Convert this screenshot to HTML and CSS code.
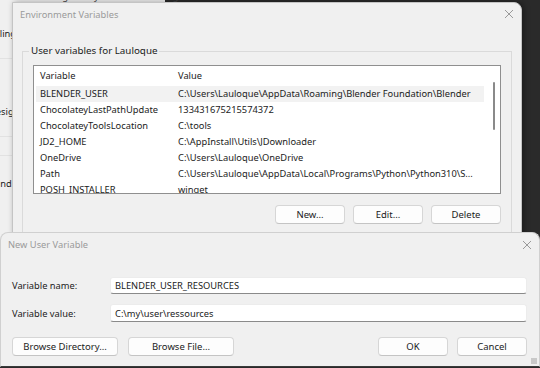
FILE: index.html
```html
<!DOCTYPE html>
<html lang="en">
<head>
  <meta charset="UTF-8" />
  <title>Environment Variables</title>
  <link rel="stylesheet" href="styles.css">
</head>
<body>
  <div class="desktop">
    <div class="bgwin">
      <div class="bg-top">Some changes may restart this dialog</div>
      <div class="bg-item bg-item-a">Scaling</div>
      <div class="bg-sep"></div>
      <div class="bg-item bg-item-b">Design</div>
      <div class="bg-sep"></div>
      <div class="bg-sep"></div>
      <div class="bg-item bg-item-c">Find and c</div>
    </div>

    <section class="window env">
      <header class="titlebar">
        <span class="title">Environment Variables</span>
        <svg class="close" width="10" height="10" viewBox="0 0 10 10"><path d="M1 1L9 9M9 1L1 9" stroke="#9a9a9a" stroke-width="1" fill="none"/></svg>
      </header>
      <fieldset class="group">
        <legend>User variables for Lauloque</legend>
        <div class="list">
          <div class="row list-head"><span>Variable</span><span>Value</span></div>
          <div class="row sel"><span>BLENDER_USER</span><span>C:\Users\Lauloque\AppData\Roaming\Blender Foundation\Blender</span></div>
          <div class="row"><span>ChocolateyLastPathUpdate</span><span>133431675215574372</span></div>
          <div class="row"><span>ChocolateyToolsLocation</span><span>C:\tools</span></div>
          <div class="row"><span>JD2_HOME</span><span>C:\AppInstall\Utils\JDownloader</span></div>
          <div class="row"><span>OneDrive</span><span>C:\Users\Lauloque\OneDrive</span></div>
          <div class="row"><span>Path</span><span>C:\Users\Lauloque\AppData\Local\Programs\Python\Python310\S...</span></div>
          <div class="row"><span>POSH_INSTALLER</span><span>winget</span></div>
          <div class="scrollbar"></div>
        </div>
        <div class="actions">
          <button class="btn">New...</button>
          <button class="btn">Edit...</button>
          <button class="btn">Delete</button>
        </div>
      </fieldset>
    </section>

    <section class="window newvar">
      <header class="titlebar">
        <span class="title">New User Variable</span>
        <svg class="close" width="10" height="10" viewBox="0 0 10 10"><path d="M1 1L9 9M9 1L1 9" stroke="#9a9a9a" stroke-width="1" fill="none"/></svg>
      </header>
      <div class="form">
        <label class="field"><span class="field-label">Variable name:</span><span class="input">BLENDER_USER_RESOURCES</span></label>
        <label class="field"><span class="field-label">Variable value:</span><span class="input input-tall">C:\my\user\ressources</span></label>
        <div class="form-actions">
          <div class="btn-group">
            <button class="btn btn-wide">Browse Directory...</button>
            <button class="btn btn-wide">Browse File...</button>
          </div>
          <div class="btn-group btn-group-right">
            <button class="btn">OK</button>
            <button class="btn">Cancel</button>
          </div>
        </div>
      </div>
      <div class="grip"></div>
    </section>
  </div>
</body>
</html>
```

FILE: styles.css
```css
body {
  margin: 0;
  font-family: 'Noto Sans', 'DejaVu Sans', sans-serif;
  font-size: 9.3px;
  color: #1b1b1b;
  background: #2a2a2a;
}

.desktop {
  position: relative;
  width: 540px;
  height: 368px;
  overflow: hidden;
  background: #2a2a2a;
}

/* window behind, only its left edge shows */
.bgwin {
  position: absolute;
  left: 0;
  top: 0;
  width: 165px;
  height: 240px;
  background: #f0f0f0;
}

.bg-top {
  margin-top: -10px;
  height: 13px;
  line-height: 13px;
  padding-left: 14px;
  white-space: nowrap;
  color: #444;
}

.bg-item {
  line-height: 13px;
  white-space: nowrap;
}

.bg-item-a { margin: 24px 0 0 -15px; }
.bg-item-b { margin: 46px 0 0 -11px; }
.bg-item-c { margin: 21px 0 0 -7px; }

.bg-sep {
  height: 1px;
  background: #e2e2e2;
  margin-top: 18px;
}

.window {
  position: absolute;
  background: #f0f0f0;
  border: 1px solid #c4c4c4;
  box-sizing: border-box;
}

.titlebar {
  display: flex;
  align-items: center;
  justify-content: space-between;
  height: 22px;
  padding: 0 7px;
}

.title {
  color: #9a9a9a;
}

.env {
  left: 12px;
  top: 2px;
  width: 510px;
  height: 250px;
  border-radius: 0 8px 0 0;
  box-shadow: 2px 0 6px rgba(0, 0, 0, 0.35);
}

.group {
  margin: 19px 9px 0 9px;
  padding: 7px 10px 10px 10px;
  border: 1px solid #dadada;
}

.group legend {
  padding: 0 2px;
  margin-left: -4px;
  line-height: 14px;
  font-size: 9.8px;
}

.list {
  position: relative;
  height: 129px;
  box-sizing: border-box;
  border: 1px solid #8f8f8f;
  background: #fff;
  padding: 0 16px 0 2px;
  overflow: hidden;
}

.row {
  display: grid;
  grid-template-columns: 138px 1fr;
  height: 16px;
  line-height: 16px;
  white-space: nowrap;
}

.row span {
  padding-left: 4px;
  overflow: hidden;
}

.list-head {
  height: 20px;
  line-height: 20px;
}

.sel {
  background: #f2f2f2;
}

.scrollbar {
  position: absolute;
  left: 459px;
  top: 16px;
  width: 2px;
  height: 48px;
  border-radius: 1px;
  background: #8a8a8a;
}

.actions {
  display: flex;
  justify-content: flex-end;
  gap: 8px;
  margin-top: 11px;
}

.btn {
  width: 70px;
  height: 19px;
  padding: 0;
  font-family: inherit;
  font-size: 9.5px;
  color: #1b1b1b;
  background: #fdfdfd;
  border: 1px solid #d6d6d6;
  border-bottom-color: #c4c4c4;
  border-radius: 4px;
}

.newvar {
  left: 0;
  top: 232px;
  width: 540px;
  height: 135px;
  border-radius: 8px 8px 0 0;
  border-color: #d0d0d0;
  border-bottom: 1px solid #3a3a3a;
}

.newvar .titlebar {
  height: 23px;
}

.form {
  padding: 21px 12px 0 11px;
}

.field {
  display: flex;
  align-items: center;
  margin-bottom: 10px;
}

.field-label {
  width: 98px;
}

.input {
  flex: 1;
  height: 17px;
  line-height: 16px;
  box-sizing: border-box;
  padding-left: 4px;
  background: #fff;
  border: 1px solid #ececec;
  border-bottom-color: #8a8a8a;
  border-radius: 3px;
}

.input-tall {
  height: 18px;
  line-height: 17px;
}

.form-actions {
  display: flex;
  justify-content: space-between;
  margin-top: 15px;
}

.btn-group {
  display: flex;
  gap: 10px;
}

.btn-group-right {
  gap: 9px;
}

.btn-wide {
  width: 106px;
}

.grip {
  position: absolute;
  right: 2px;
  bottom: 2px;
  width: 6px;
  height: 6px;
  background: radial-gradient(circle, #9a9a9a 0.6px, transparent 0.8px) 0 0 / 2px 2px;
}
```
